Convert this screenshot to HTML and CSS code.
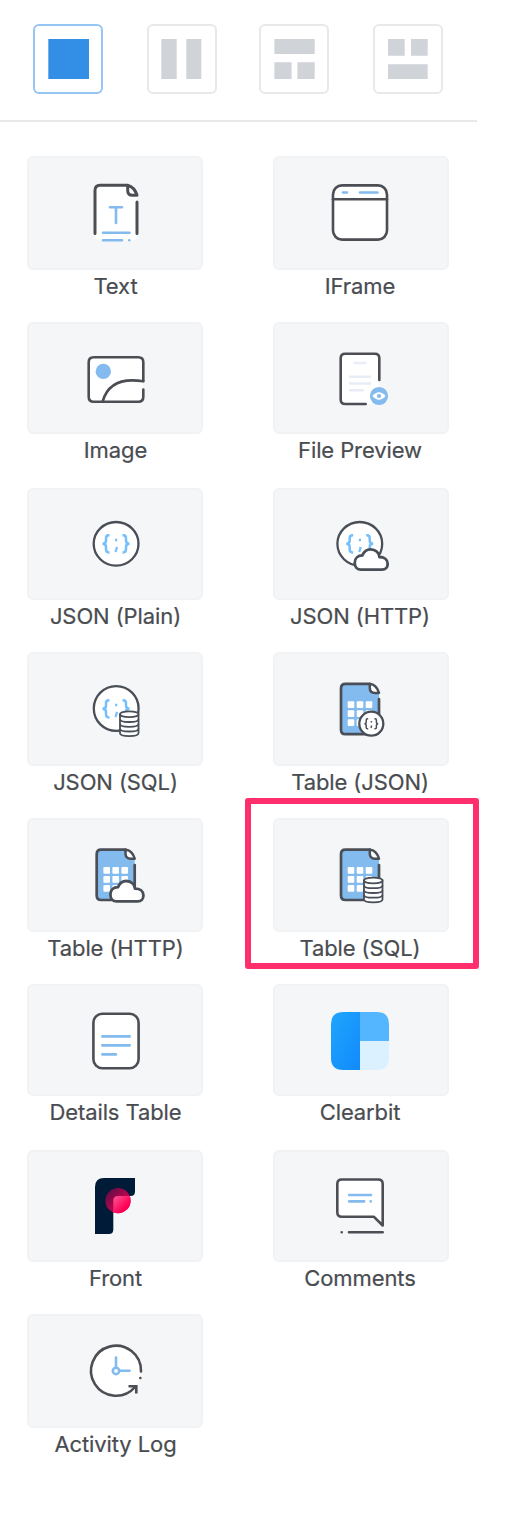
FILE: index.html
```html
<!DOCTYPE html>
<html lang="en">
<head>
<meta charset="utf-8">
<title>Components</title>
<link rel="stylesheet" href="styles.css">
</head>
<body>
<svg class="defs" width="0" height="0" aria-hidden="true">
  <defs>
    <g id="braces" fill="none" stroke="#74bffc" stroke-width="2.500">
      <path d="M30.500 27.200h-.7q-2.800 0-2.800 2.800v2.800q0 3-3.500 3 3.500 0 3.500 3v2.800q0 2.800 2.800 2.800h.7M43.500 27.200h.7q2.800 0 2.800 2.800v2.800q0 3 3.500 3-3.500 0-3.500 3v2.800q0 2.800-2.800 2.800h-.7"/>
      <path d="M37.200 30.700v2.600M37.900 38.800q-.3 2.600-1.500 5.200" stroke-width="2.200"/>
    </g>
    <g id="cloud">
      <path d="M36 61.700C32.200 61.700 29.700 58.800 29.700 55C29.700 50.200 33 47.400 37.300 47.400C39 43.300 42 41.300 45.700 41.300C50.500 41.300 54 44.600 54.300 49C59.200 49 62.700 51.500 62.700 55.700C62.700 59.300 60.500 61.700 57 61.700Z" fill="#fff" stroke="#494e57" stroke-width="2.800" stroke-linejoin="round"/>
    </g>
    <g id="database" fill="#fff" stroke="#494e57" stroke-width="1.800">
      <path d="M41 41.300V60.300C41 64 59.500 64 59.500 60.300V41.300Z"/>
      <path d="M41 46.200C41 49.900 59.500 49.900 59.500 46.200M41 51C41 54.700 59.500 54.700 59.500 51M41 55.700C41 59.400 59.500 59.400 59.500 55.700" fill="none"/>
      <ellipse cx="50.250" cy="41.300" rx="9.250" ry="2.900"/>
    </g>
    <g id="sheet">
      <path d="M20.500 10.700H46L54 20V61H20.500Q16 61 16 56.500V15.200Q16 10.700 20.500 10.700Z" fill="#84bbee"/>
      <path d="M54 26V56.500Q54 61 49.500 61H20.500Q16 61 16 56.500V15.200Q16 10.700 20.500 10.700H45" fill="none" stroke="#494e57" stroke-width="2.700" stroke-linecap="round"/>
      <path d="M44.800 10.700Q51.500 11 54 19.700H50Q44.800 19.700 44.800 14.500Z" fill="#fff" stroke="#494e57" stroke-width="2.500" stroke-linejoin="round"/>
      <g fill="#fff">
        <rect x="22.700" y="28" width="6.600" height="6.700" rx="1"/><rect x="31.700" y="28" width="6.600" height="6.700" rx="1"/><rect x="40.700" y="28" width="6.600" height="6.700" rx="1"/>
        <rect x="22.700" y="37" width="6.600" height="6.700" rx="1"/><rect x="31.700" y="37" width="6.600" height="6.700" rx="1"/><rect x="40.700" y="37" width="6.600" height="6.700" rx="1"/>
        <rect x="22.700" y="46" width="6.600" height="6.700" rx="1"/><rect x="31.700" y="46" width="6.600" height="6.700" rx="1"/>
      </g>
    </g>
    <linearGradient id="clearbit" x1="0" y1="0" x2="1" y2="1"><stop offset="0" stop-color="#1fa5fd"/><stop offset="1" stop-color="#128afb"/></linearGradient>
    <linearGradient id="dark" x1="0" y1="0" x2="1" y2="1"><stop offset="0" stop-color="#4b1040"/><stop offset=".75" stop-color="#e00055"/></linearGradient>
    <linearGradient id="pink" x1="0" y1="0" x2="1" y2="1"><stop offset="0" stop-color="#ff5895"/><stop offset=".65" stop-color="#ff0055"/></linearGradient>
    <clipPath id="ball"><circle cx="39" cy="30.700" r="12.600"/></clipPath>
  </defs>
</svg>

<nav class="layouts">
  <button class="layout active" aria-label="Single"><svg viewBox="0 0 66 66"><path d="M13.300 13H54V53H13.300Z"/></svg></button>
  <button class="layout" aria-label="Two columns"><svg viewBox="0 0 66 66"><path d="M12.300 13h15.400v40H12.300ZM37.300 13h15v40h-15Z"/></svg></button>
  <button class="layout third" aria-label="Header and two columns"><svg viewBox="0 0 66 66"><path d="M13.400 13h40.300v15H13.400ZM13.400 36.200h17.200V53H13.400ZM36.400 36.200h17.300V53H36.400Z"/></svg></button>
  <button class="layout" aria-label="Two columns and footer"><svg viewBox="0 0 66 66"><path d="M13 13h16.700v16.700H13ZM36 13h16.700v16.700H36ZM13 38.200h39.700V53H13Z"/></svg></button>
</nav>

<main class="components">
  <div class="item">
    <div class="card"><svg class="icon" viewBox="0 0 72 72">
      <path d="M21 8.300H49L58 20V58Q58 63.500 52.500 63.500H21.500Q16 63.500 16 58V13.300Q16 8.300 21 8.300Z" fill="#fff"/>
      <g class="ink thick"><path d="M16 56.500V13.300Q16 8.300 21 8.300H49M58 25V56.500"/><path d="M48.700 8.500Q55.500 10 58 18.300H53.500Q48.700 18.300 48.700 13.500Z"/></g>
      <g class="sky"><path d="M31 30.300H43M37 30.300V46M24 55.700H50.500M24 63.300H43M50.300 63.300h.01"/></g>
    </svg></div>
    <div class="label">Text</div>
  </div>
  <div class="item">
    <div class="card"><svg class="icon" viewBox="0 0 72 72">
      <rect x="8" y="8.400" width="54" height="54.200" rx="9" fill="#fff" class="ink"/><path class="ink" d="M8 22.300H62"/>
      <path class="sky" d="M18 15.500H22M35 15.500H52.500"/>
    </svg></div>
    <div class="label">IFrame</div>
  </div>

  <div class="item">
    <div class="card short"><svg class="icon" viewBox="0 0 72 72">
      <rect x="9.700" y="15.300" width="54.600" height="44.400" rx="5" fill="#fff"/>
      <path class="ink" d="M64.300 39V20.300Q64.300 15.300 59.300 15.300H14.700Q9.700 15.300 9.700 20.300V54.700Q9.700 59.700 14.700 59.700H59.300Q64.300 59.700 64.300 54.700V47.500"/>
      <path class="ink" d="M23.700 59.300C28.500 42.500 41.500 35.600 64.300 39.300"/>
      <circle cx="24.300" cy="29.400" r="7.700" fill="#84bbee"/>
    </svg></div>
    <div class="label">Image</div>
  </div>
  <div class="item">
    <div class="card short"><svg class="icon" viewBox="0 0 72 72">
      <rect x="15.700" y="11.700" width="38.600" height="50.300" rx="5" fill="#fff"/>
      <path class="ink" d="M54.300 38V16.200Q54.300 11.700 49.800 11.700H20.200Q15.700 11.700 15.700 16.200V57.500Q15.700 62 20.200 62H40.700"/>
      <path d="M29.500 21H40.500M25 34.700H45M25 41.500H45M25 48.300H37.700" fill="none" stroke="#e8ecf5" stroke-width="2.600" stroke-linecap="round"/>
      <circle cx="54" cy="54" r="9.100" fill="#84bbee"/>
      <path d="M47.400 54Q54 46.500 60.600 54Q54 61.500 47.400 54Z" fill="#fff"/><circle cx="54" cy="54" r="2.100" fill="#84bbee"/>
    </svg></div>
    <div class="label">File Preview</div>
  </div>

  <div class="item">
    <div class="card short"><svg class="icon" viewBox="0 0 72 72">
      <ellipse class="ring" cx="37.100" cy="35.800" rx="22.400" ry="21.800"/><use href="#braces"/>
    </svg></div>
    <div class="label">JSON (Plain)</div>
  </div>
  <div class="item">
    <div class="card short"><svg class="icon" viewBox="0 0 72 72">
      <ellipse class="ring" cx="34.800" cy="35.800" rx="22.400" ry="21.800"/><use href="#braces" x="-2.300"/><use href="#cloud"/>
    </svg></div>
    <div class="label">JSON (HTTP)</div>
  </div>

  <div class="item">
    <div class="card"><svg class="icon" viewBox="0 0 72 72">
      <circle class="ring" cx="37.200" cy="35.500" r="22.400"/><use href="#braces"/><use href="#database"/>
    </svg></div>
    <div class="label">JSON (SQL)</div>
  </div>
  <div class="item">
    <div class="card"><svg class="icon" viewBox="0 0 72 72">
      <use href="#sheet" y=".2"/>
      <circle class="ring" cx="46.300" cy="50.700" r="12"/>
      <path d="M43.200 45.700h-.7q-1.300 0-1.300 1.300v2q0 1.700-1.800 1.700 1.800 0 1.800 1.700v2q0 1.300 1.300 1.300h.7M49.400 45.700h.7q1.300 0 1.300 1.300v2q0 1.700 1.800 1.700-1.800 0-1.800 1.700v2q0 1.300-1.300 1.300h-.7M46.400 48v1.500M46.500 52.500q0 1.300-.6 2.300" fill="none" stroke="#494e57" stroke-width="1.500"/>
    </svg></div>
    <div class="label">Table (JSON)</div>
  </div>

  <div class="item">
    <div class="card"><svg class="icon" viewBox="0 0 72 72"><use href="#sheet" x="1.700"/><use href="#cloud" x="1.700" y=".7"/></svg></div>
    <div class="label">Table (HTTP)</div>
  </div>
  <div class="item selected">
    <div class="card"><svg class="icon" viewBox="0 0 72 72"><use href="#sheet"/><use href="#database" x="-2" y=".2"/></svg></div>
    <div class="label">Table (SQL)</div>
  </div>

  <div class="item">
    <div class="card short"><svg class="icon" viewBox="0 0 72 72">
      <rect class="ink" x="14.400" y="9.700" width="45.200" height="54.500" rx="9" fill="#fff"/>
      <path class="sky" d="M23.300 32.400H50.700M23.300 41.400H50.700M23.300 50.400H37"/>
    </svg></div>
    <div class="label">Details Table</div>
  </div>
  <div class="item">
    <div class="card short"><svg class="icon" viewBox="0 0 72 72">
      <path d="M35 8V66H18Q6 66 6 54V20Q6 8 18 8Z" fill="url(#clearbit)"/>
      <path d="M35 8H52Q64 8 64 20V37H35Z" fill="#53b6fe"/>
      <path d="M35 37H64V54Q64 66 52 66H35Z" fill="#dcf1ff"/>
    </svg></div>
    <div class="label">Clearbit</div>
  </div>

  <div class="item">
    <div class="card short"><svg class="icon" viewBox="0 0 72 72">
      <path d="M25 8H56V21.500Q56 26 51.500 26H39Q34.300 26 34.300 30.700V59.500Q34.300 64 29.800 64H16V17Q16 8 25 8Z" fill="#001b38"/>
      <circle cx="39" cy="30.700" r="12.600" fill="url(#dark)"/>
      <path clip-path="url(#ball)" d="M34.300 44V30.700Q34.300 26 39 26H52V44Z" fill="url(#pink)"/>
    </svg></div>
    <div class="label">Front</div>
  </div>
  <div class="item">
    <div class="card short"><svg class="icon" viewBox="0 0 72 72">
      <path class="ink" fill="#fff" d="M16.800 9.500H53.200Q57.700 9.500 57.700 14V55.500L49 46.800H16.800Q12.300 46.800 12.300 42.300V14Q12.300 9.500 16.800 9.500Z"/>
      <path class="ink" d="M24 62.300H57.700M16.700 62.300h.01"/>
      <path class="sky" d="M24.200 25H46M24.200 31.400H39.200M45.700 31.400h.01"/>
    </svg></div>
    <div class="label">Comments</div>
  </div>

  <div class="item">
    <div class="card"><svg class="icon" viewBox="0 0 72 72">
      <circle cx="37" cy="35.700" r="25" fill="#fff"/>
      <path class="ink" d="M62 36.500A25 25 0 1 0 56 52"/>
      <path class="ink square" d="M49.500 51.300H57.300V58.500"/><path class="ink" d="M61.300 43h.01"/>
      <g class="sky"><path d="M37 22.500V32.500M40.500 35.700H50.500"/><circle cx="37" cy="35.900" r="3.200" fill="#fff"/></g>
    </svg></div>
    <div class="label">Activity Log</div>
  </div>
</main>
</body>
</html>
```

FILE: styles.css
```css
*,
*::after { box-sizing: border-box; }

body {
  margin: 0;
  background: #fff;
  color: #494c50;
  font-family: Inter, "Liberation Sans", sans-serif;
}

.defs { position: absolute; }

.layouts {
  display: flex;
  gap: 44px;
  width: 477px;
  height: 122px;
  padding: 24px 0 0 33px;
  border-bottom: 2px solid #e8e8e8;
}

.layout {
  flex: none;
  width: 70px;
  height: 70px;
  padding: 0;
  border: 2px solid #e8e8e8;
  border-radius: 6px;
  background: #fff;
  fill: #d0d4d9;
}

.layout.third { margin-left: -2px; }
.layout.active { border-color: #96c5f3; fill: #338fe5; }
.layout svg { display: block; width: 66px; height: 66px; }

.components {
  display: grid;
  grid-template-columns: 176px 176px;
  grid-template-rows: 166px 166px 164px 166px 166px 166px 164px 166px;
  column-gap: 70px;
  padding: 34px 0 0 27px;
}

.item { position: relative; }

.card {
  display: flex;
  align-items: center;
  justify-content: center;
  height: 114px;
  border: 2px solid #f1f2f3;
  border-radius: 6px;
  background: #f4f6f8;
}

.card.short { height: 112px; }
.icon { display: block; width: 72px; height: 72px; }

.label {
  padding-left: 1px;
  font-size: 22px;
  line-height: 32px;
  letter-spacing: -0.1px;
  text-align: center;
  white-space: nowrap;
  -webkit-text-stroke: 0.2px #494c50;
}

.item:nth-child(even) .label { padding: 0 2px 0 0; }

.selected::after {
  content: "";
  position: absolute;
  top: -20px;
  left: -28px;
  width: 234px;
  height: 171px;
  border: 6px solid #ff2f6d;
  border-radius: 3px;
}

.ink, .sky, .sky * {
  stroke-width: 2.6;
  stroke-linecap: round;
  stroke-linejoin: round;
}

.ink { stroke: #4c4e54; }
.ink:not([fill]) { fill: none; }
.thick { stroke-width: 3; }
.square { stroke-linecap: butt; stroke-linejoin: miter; }
.sky { fill: none; stroke: #84bbee; }
.ring { fill: #fff; stroke: #494e57; stroke-width: 2.3; }
```
